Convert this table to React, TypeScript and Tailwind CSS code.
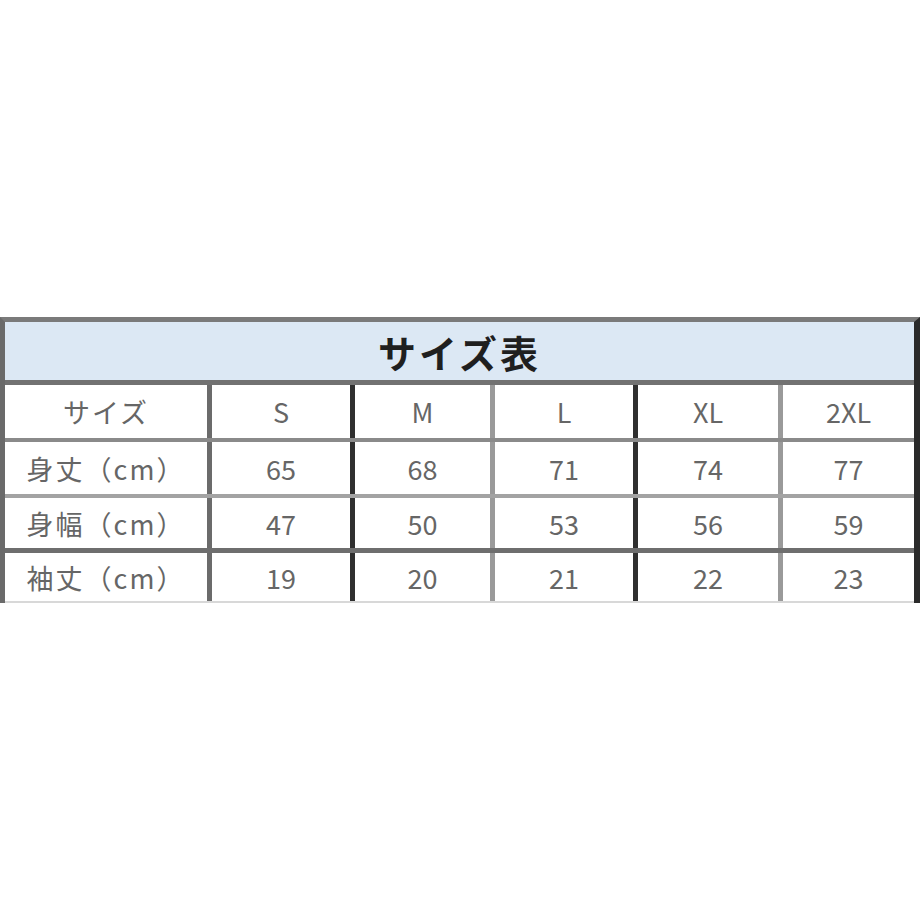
import React from "react";

const cols = [
  { w: "w-[207px]", line: "border-[#6b6b6b]" },
  { w: "w-[143px]", line: "border-[#2f2f2f]" },
  { w: "w-[140px]", line: "border-[#9a9a9a]" },
  { w: "w-[143px]", line: "border-[#2f2f2f]" },
  { w: "w-[145px]", line: "border-[#9a9a9a]" },
  { w: "w-[131px]", line: "" },
];

const rows = [
  { cells: ["サイズ", "S", "M", "L", "XL", "2XL"], h: "h-[57px]", line: "border-b-4 border-[#8a8a8a]" },
  { cells: ["身丈（cm）", "65", "68", "71", "74", "77"], h: "h-[56px]", line: "border-b-4 border-[#a3a3a3]" },
  { cells: ["身幅（cm）", "47", "50", "53", "56", "59"], h: "h-[55px]", line: "border-b-[5px] border-[#6e6e6e]" },
  { cells: ["袖丈（cm）", "19", "20", "21", "22", "23"], h: "h-[50px]", line: "border-b-2 border-[#d8d8d8]" },
];

const App = () => {
  return (
    <div
      className="flex h-[920px] w-[920px] items-center bg-white"
      style={{ fontFamily: '"Noto Sans CJK JP", "Noto Sans", sans-serif' }}
    >
      <div className="w-[920px] border-t-[5px] border-l-[5px] border-r-[6px] border-t-[#7a7a7a] border-l-[#6a6a6a] border-r-[#2a2a2a]">
        {/* Title */}
        <div className="flex h-[63px] items-center justify-center border-b-[5px] border-[#727272] bg-[#dce8f4]">
          <span className="text-[38px] font-bold tracking-[3px] text-[#1f1f1f]">サイズ表</span>
        </div>

        {/* Body */}
        {rows.map((row, ri) => (
          <div key={ri} className={`flex ${row.h} ${row.line}`}>
            {row.cells.map((c, ci) => (
              <div
                key={ci}
                className={`flex items-center justify-center ${cols[ci].w} ${
                  ci < 5 ? `border-r-[5px] ${cols[ci].line}` : ""
                }`}
              >
                <span
                  className={`text-[27px] leading-none text-[#666] ${
                    ci === 0 ? "tracking-[2px]" : ""
                  }`}
                >
                  {c}
                </span>
              </div>
            ))}
          </div>
        ))}
      </div>
    </div>
  );
};

export default App;
